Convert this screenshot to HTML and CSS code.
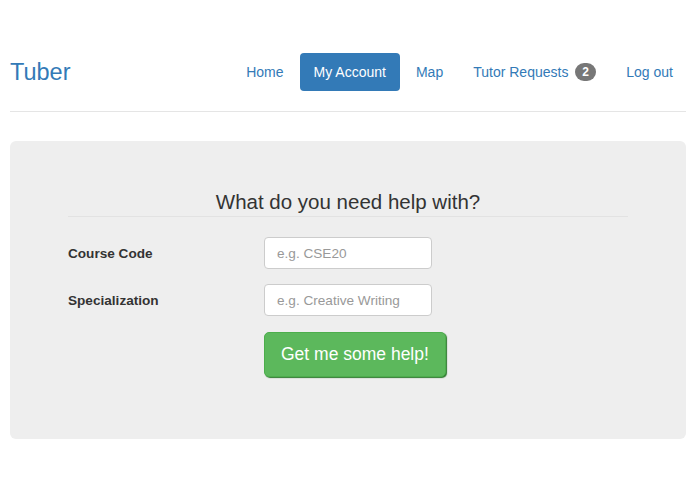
FILE: index.html
```html
<!DOCTYPE html>
<html lang="en">
<head>
    <meta charset="UTF-8">
    <title>Tuber</title>
    <link rel="stylesheet" href="styles.css">
</head>
<body>
  <header class="site-header">
    <h3 class="logo">Tuber</h3>
    <ul class="nav-pills">
      <li><a href="#">Home</a></li>
      <li class="active"><a href="#">My Account</a></li>
      <li><a href="#">Map</a></li>
      <li><a href="#">Tutor Requests <span class="badge">2</span></a></li>
      <li><a href="#">Log out</a></li>
    </ul>
  </header>

  <main class="jumbotron">
    <h2 class="help-title">What do you need help with?</h2>
    <form class="help-form">
      <div class="form-row">
        <label for="course">Course Code</label>
        <input type="text" id="course" class="form-control" placeholder="e.g. CSE20">
      </div>
      <div class="form-row">
        <label for="spec">Specialization</label>
        <input type="text" id="spec" class="form-control" placeholder="e.g. Creative Writing">
      </div>
      <div class="form-row">
        <span class="spacer"></span>
        <button type="button" class="btn-success">Get me some help!</button>
      </div>
    </form>
  </main>
</body>
</html>
```

FILE: styles.css
```css
/* Base */
body {
  margin: 0;
  padding: 0 9px 0 10px;
  font-family: "Liberation Sans", Arial, sans-serif;
  font-size: 14px;
  color: #333;
  background: #fff;
}

/* Header + nav */
.site-header {
  display: flex;
  justify-content: space-between;
  align-items: center;
  padding: 53px 0 20px;
  border-bottom: 1px solid #e5e5e5;
}

.logo {
  margin: 0;
  font-size: 23.5px;
  font-weight: normal;
  color: #337ab7;
  line-height: 38px;
}

.nav-pills {
  display: flex;
  list-style: none;
  margin: 0 -1px 0 0;
  padding: 0;
}

.nav-pills li + li {
  margin-left: 2px;
}

.nav-pills a {
  display: block;
  padding: 9px 14px;
  line-height: 20px;
  color: #337ab7;
  text-decoration: none;
  border-radius: 4px;
}

.nav-pills .active a {
  background: #337ab7;
  color: #fff;
}

.badge {
  display: inline-block;
  min-width: 7px;
  margin-left: 3px;
  padding: 3px 7px;
  font-size: 12px;
  font-weight: bold;
  line-height: 1;
  color: #fff;
  background: #777;
  border-radius: 10px;
  vertical-align: 1px;
}

/* Grey box */
.jumbotron {
  margin-top: 29px;
  padding: 50px 58px 62px;
  background: #eee;
  border-radius: 6px;
}

.help-title {
  margin: 0 0 20px;
  padding-bottom: 3px;
  border-bottom: 1px solid #e2e2e2;
  font-size: 20.5px;
  font-weight: normal;
  line-height: 22px;
  text-align: center;
  color: #333;
}

.help-form {
  display: flex;
  flex-direction: column;
  gap: 15px;
}

.form-row {
  display: flex;
  align-items: center;
}

.form-row label,
.spacer {
  width: 196px;
  font-size: 13.6px;
  font-weight: bold;
}

.form-control {
  box-sizing: border-box;
  width: 168px;
  height: 32px;
  padding: 6px 12px;
  font-family: inherit;
  font-size: 13.6px;
  color: #555;
  background: #fff;
  border: 1px solid #ccc;
  border-radius: 4px;
}

.form-control::placeholder {
  color: #999;
}

.btn-success {
  box-sizing: border-box;
  height: 45px;
  margin-top: 1px;
  padding: 0 16px;
  font-family: inherit;
  font-size: 17.5px;
  color: #fff;
  background: #5cb85c;
  border: 1px solid #4cae4c;
  border-radius: 5px;
  box-shadow: 1px 1px 1px #2f7a2f;
  cursor: pointer;
}
```
